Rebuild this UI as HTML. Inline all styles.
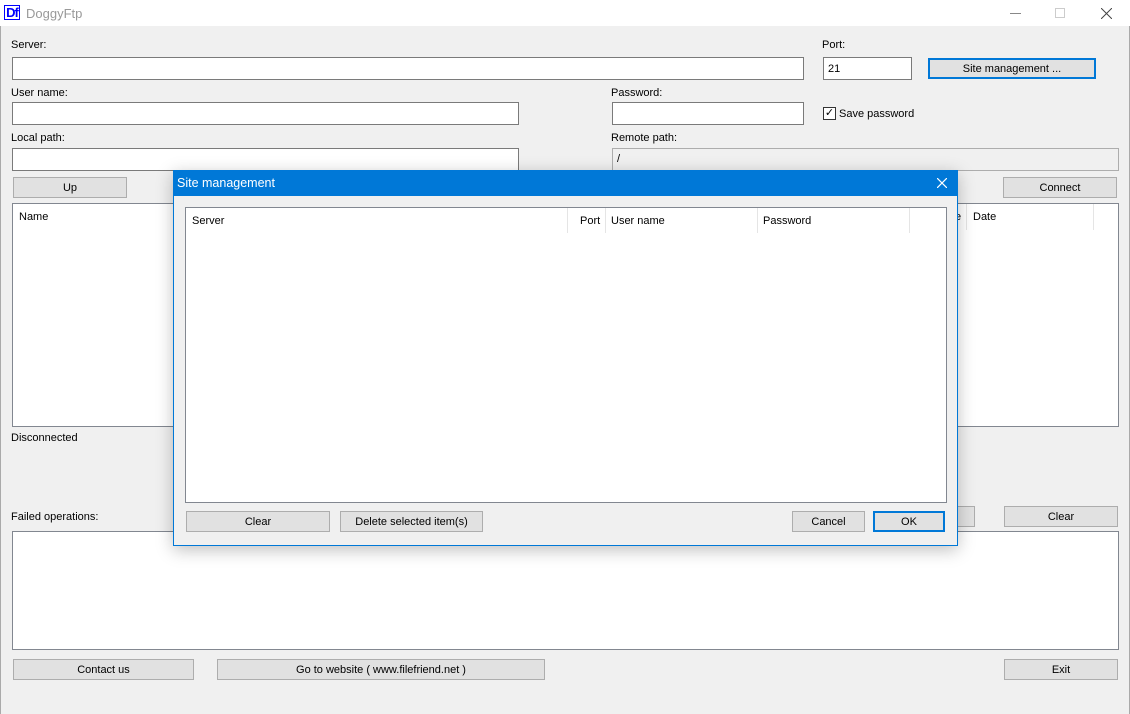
<!DOCTYPE html><html><head><style>
body{margin:0;width:1130px;height:714px;background:#f0f0f0;font-family:"Liberation Sans",sans-serif;font-size:11px;color:#000;position:relative;overflow:hidden}
div{position:absolute;box-sizing:border-box}
.in{background:#fff;border:1px solid #7a7a7a}
.b{background:#e1e1e1;border:1px solid #adadad;text-align:center;line-height:21px}
.l{white-space:nowrap}
</style></head><body>
<div style="left:0;top:0;width:1130px;height:26px;background:#fff"></div>
<div style="left:4px;top:5px;width:16px;height:15px;border:1px solid #00f;color:#00f;font-weight:bold;font-size:13px;line-height:13px;text-align:center;letter-spacing:-1px">Df</div>
<div class="l" style="left:26px;top:6px;color:#999;font-size:13px">DoggyFtp</div>
<div style="left:1010px;top:13px;width:11px;height:1px;background:#888"></div>
<div style="left:1055px;top:8px;width:10px;height:10px;border:1px solid #ccc"></div>
<svg style="position:absolute;left:1101px;top:8px" width="11" height="11"><path d="M0 0L11 11M11 0L0 11" stroke="#444" stroke-width="1"/></svg>
<div style="left:0;top:26px;width:1px;height:688px;background:#aaa"></div>
<div style="left:1129px;top:26px;width:1px;height:688px;background:#aaa"></div>

<div class="l" style="left:11px;top:39px">Server:</div>
<div class="in" style="left:12px;top:57px;width:792px;height:23px"></div>
<div class="l" style="left:822px;top:39px">Port:</div>
<div class="in" style="left:823px;top:57px;width:89px;height:23px;padding:5px 4px">21</div>
<div class="b" style="left:928px;top:58px;width:168px;height:21px;border:2px solid #0078d7;line-height:19px">Site management ...</div>
<div class="l" style="left:11px;top:87px">User name:</div>
<div class="in" style="left:12px;top:102px;width:507px;height:23px"></div>
<div class="l" style="left:611px;top:87px">Password:</div>
<div class="in" style="left:612px;top:102px;width:192px;height:23px"></div>
<div style="left:823px;top:107px;width:13px;height:13px;border:1px solid #333;background:#fff;font-size:11px;line-height:11px;text-align:center">✓</div>
<div class="l" style="left:839px;top:108px">Save password</div>
<div class="l" style="left:11px;top:132px">Local path:</div>
<div class="in" style="left:12px;top:148px;width:507px;height:23px"></div>
<div class="l" style="left:611px;top:132px">Remote path:</div>
<div style="left:612px;top:148px;width:507px;height:23px;border:1px solid #adadad;background:#f0f0f0;padding:4px 4px">/</div>
<div class="b" style="left:13px;top:177px;width:114px;height:21px">Up</div>
<div class="b" style="left:1003px;top:177px;width:114px;height:21px">Connect</div>
<div class="in" style="left:12px;top:203px;width:170px;height:224px;border-color:#828790"></div>
<div class="l" style="left:19px;top:211px">Name</div>
<div class="in" style="left:940px;top:203px;width:179px;height:224px;border-color:#828790"></div>
<div class="l" style="left:955px;top:211px">e</div>
<div style="left:966px;top:204px;width:1px;height:26px;background:#e5e5e5"></div>
<div class="l" style="left:973px;top:211px">Date</div>
<div style="left:1093px;top:204px;width:1px;height:26px;background:#e5e5e5"></div>
<div class="l" style="left:11px;top:432px">Disconnected</div>
<div class="l" style="left:11px;top:511px">Failed operations:</div>
<div class="b" style="left:940px;top:506px;width:35px;height:21px"></div>
<div class="b" style="left:1004px;top:506px;width:114px;height:21px">Clear</div>
<div class="in" style="left:12px;top:531px;width:1107px;height:119px;border-color:#828790"></div>
<div class="b" style="left:13px;top:659px;width:181px;height:21px">Contact us</div>
<div class="b" style="left:217px;top:659px;width:328px;height:21px">Go to website ( www.filefriend.net )</div>
<div class="b" style="left:1004px;top:659px;width:114px;height:21px">Exit</div>

<div style="left:173px;top:170px;width:785px;height:376px;background:#f0f0f0;border:1px solid #0078d7;box-shadow:0 4px 16px rgba(0,0,0,.25)"></div>
<div style="left:173px;top:170px;width:785px;height:26px;background:#0078d7"></div>
<div class="l" style="left:177px;top:176px;color:#fff;font-size:12.5px">Site management</div>
<svg style="position:absolute;left:937px;top:178px" width="10" height="10"><path d="M0 0L10 10M10 0L0 10" stroke="#fff" stroke-width="1.2"/></svg>
<div class="in" style="left:185px;top:207px;width:762px;height:296px;border-color:#828790"></div>
<div class="l" style="left:192px;top:215px">Server</div>
<div style="left:567px;top:208px;width:1px;height:25px;background:#e5e5e5"></div>
<div class="l" style="left:580px;top:215px">Port</div>
<div style="left:605px;top:208px;width:1px;height:25px;background:#e5e5e5"></div>
<div class="l" style="left:611px;top:215px">User name</div>
<div style="left:757px;top:208px;width:1px;height:25px;background:#e5e5e5"></div>
<div class="l" style="left:763px;top:215px">Password</div>
<div style="left:909px;top:208px;width:1px;height:25px;background:#e5e5e5"></div>
<div class="b" style="left:186px;top:511px;width:144px;height:21px">Clear</div>
<div class="b" style="left:340px;top:511px;width:143px;height:21px">Delete selected item(s)</div>
<div class="b" style="left:792px;top:511px;width:73px;height:21px">Cancel</div>
<div class="b" style="left:873px;top:511px;width:72px;height:21px;border:2px solid #0078d7;line-height:19px">OK</div>
</body></html>
